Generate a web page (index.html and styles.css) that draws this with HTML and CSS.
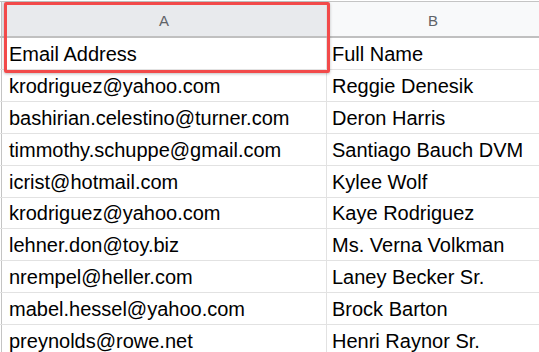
FILE: index.html
```html
<!DOCTYPE html>
<html>
<head>
<meta charset="utf-8">
<link rel="stylesheet" href="styles.css">
</head>
<body>
<div class="sheet">
  <div class="hdr">
    <div class="rh"></div>
    <div class="ch ch-a sel">A</div>
    <div class="ch ch-b">B</div>
  </div>
  <div class="row first">
    <div class="rh"></div>
    <div class="c a">Email Address</div>
    <div class="c b">Full Name</div>
  </div>
  <div class="row"><div class="rh"></div><div class="c a">krodriguez@yahoo.com</div><div class="c b">Reggie Denesik</div></div>
  <div class="row"><div class="rh"></div><div class="c a">bashirian.celestino@turner.com</div><div class="c b">Deron Harris</div></div>
  <div class="row"><div class="rh"></div><div class="c a">timmothy.schuppe@gmail.com</div><div class="c b">Santiago Bauch DVM</div></div>
  <div class="row"><div class="rh"></div><div class="c a">icrist@hotmail.com</div><div class="c b">Kylee Wolf</div></div>
  <div class="row"><div class="rh"></div><div class="c a">krodriguez@yahoo.com</div><div class="c b">Kaye Rodriguez</div></div>
  <div class="row"><div class="rh"></div><div class="c a">lehner.don@toy.biz</div><div class="c b">Ms. Verna Volkman</div></div>
  <div class="row"><div class="rh"></div><div class="c a">nrempel@heller.com</div><div class="c b">Laney Becker Sr.</div></div>
  <div class="row"><div class="rh"></div><div class="c a">mabel.hessel@yahoo.com</div><div class="c b">Brock Barton</div></div>
  <div class="row"><div class="rh"></div><div class="c a">preynolds@rowe.net</div><div class="c b">Henri Raynor Sr.</div></div>
  <div class="highlight"></div>
</div>
</body>
</html>
```
FILE: styles.css
```css
html, body {
  margin: 0;
  padding: 0;
  background: #ffffff;
  overflow: hidden;
}
.sheet {
  position: relative;
  width: 560px;
  font-family: "Liberation Sans", Arial, sans-serif;
}
.hdr {
  display: flex;
  margin-top: 1px;
  height: 37px;
  box-sizing: border-box;
  border-top: 1px solid #c4c4c4;
  border-bottom: 2px solid #c0c0c0;
  background: #f8f9fa;
}
.rh {
  width: 1px;
  flex: none;
  border-right: 1px solid #c4c4c4;
  background: #ffffff;
}
.ch {
  display: flex;
  align-items: center;
  justify-content: center;
  font-size: 15px;
  color: #5f6368;
  padding-top: 2px;
  box-sizing: border-box;
}
.ch-a {
  width: 325px;
  flex: none;
  border-right: 1px solid #e0e0e0;
}
.ch-a.sel {
  background: #e8eaed;
}
.ch-b {
  width: 212px;
  flex: none;
}
.row {
  display: flex;
  height: 31.875px;
  box-sizing: border-box;
  border-bottom: 1px solid #e2e2e2;
}
.row.first {
  height: 32px;
}
.c {
  display: flex;
  align-items: flex-end;
  font-size: 20px;
  line-height: 23px;
  color: #000000;
  padding-bottom: 3px;
  box-sizing: border-box;
  white-space: nowrap;
  overflow: hidden;
}
.c.a {
  width: 325px;
  flex: none;
  padding-left: 7px;
  border-right: 1px solid #e2e2e2;
}
.c.b {
  width: 212px;
  flex: none;
  padding-left: 5px;
}
.highlight {
  position: absolute;
  left: 4px;
  top: 1px;
  width: 326px;
  height: 71px;
  box-sizing: border-box;
  border: 3px solid #f24a4a;
  border-radius: 2px;
  box-shadow: 0 1px 3px rgba(0, 0, 0, 0.25);
}
```
